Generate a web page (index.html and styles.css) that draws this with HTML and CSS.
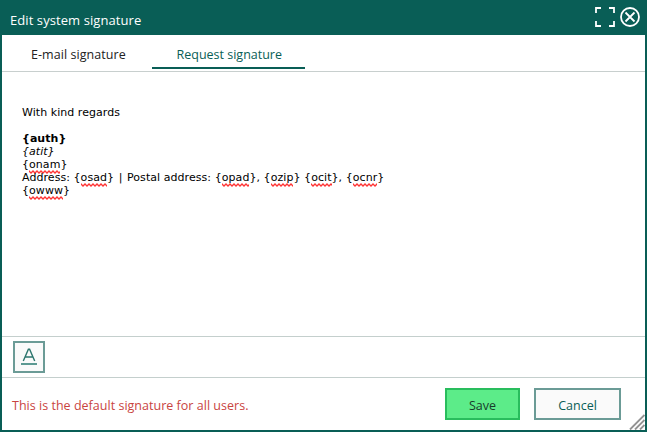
FILE: index.html
```html
<!DOCTYPE html>
<html lang="en">
<head>
<meta charset="utf-8">
<title>Edit system signature</title>
<link rel="stylesheet" href="styles.css">
</head>
<body>
<main class="dialog">
  <header class="titlebar">
    <h1 class="title">Edit system signature</h1>
    <svg class="expand" width="20" height="20" viewBox="0 0 20 20"><path d="M1 6V1H6M14 1H19V6M19 14V19H14M6 19H1V14"/></svg>
    <svg class="close" width="20" height="20" viewBox="0 0 20 20"><circle cx="10" cy="10" r="9"/><path d="M5.5 5.5L14.5 14.5M14.5 5.5L5.5 14.5"/></svg>
  </header>
  <nav class="tabs">
    <a class="tab tab-mail"><span>E-mail signature</span></a>
    <a class="tab tab-request"><span>Request signature</span></a>
  </nav>
  <section class="editor">
    <p>With kind regards</p>
    <p class="gap"><b>{auth}</b></p>
    <p><i>{atit}</i></p>
    <p>{<span class="sp">onam</span>}</p>
    <p class="address">Address: {<span class="sp">osad</span>} <span class="pipe">|</span> Postal address: {<span class="sp">opad</span>}, {<span class="sp">ozip</span>} {<span class="sp">ocit</span>}, {<span class="sp">ocnr</span>}</p>
    <p>{<span class="sp">owww</span>}</p>
  </section>
  <div class="toolbar">
    <button class="format"><svg width="28" height="28" viewBox="0 0 28 28"><path class="letter" d="M8.3 18L13.4 6.2H14.6L19.7 18M10.2 14H17.8"/><path class="rule" d="M6 21H22"/></svg></button>
  </div>
  <footer class="footer">
    <p class="note">This is the default signature for all users.</p>
    <button class="btn save">Save</button>
    <button class="btn cancel">Cancel</button>
  </footer>
  <svg class="grip" width="16" height="16" viewBox="0 0 16 16"><path d="M1 15.5L15.5 1M6 15.5L15.5 6M11 15.5L15.5 11"/></svg>
</main>
</body>
</html>
```
FILE: styles.css
```css
* { box-sizing: border-box; }
body { margin: 0; }
h1, p { margin: 0; }
.dialog {
  position: relative;
  display: flex;
  flex-direction: column;
  width: 647px;
  height: 432px;
  border: 2px solid #095e56;
  border-top: 0;
  background: #fff;
  font: 12.5px/18px "Open Sans", "Noto Sans", sans-serif;
  overflow: hidden;
}
.titlebar {
  display: flex;
  align-items: flex-start;
  height: 35px;
  padding: 7px 5px 0 8px;
  background: #095e56;
  color: #fff;
}
.title { flex: 1; font-size: 13px; font-weight: 400; padding-top: 4px; letter-spacing: 0.08px; }
.titlebar svg { fill: none; stroke: #fff; stroke-width: 1.8; }
.expand { margin-right: 5px; }
.tabs { display: flex; height: 37px; border-bottom: 1px solid #c8cfce; }
.tab { height: 34px; padding-top: 11px; color: #222; white-space: nowrap; }
.tab-mail { width: 150px; padding-left: 29px; letter-spacing: 0.06px; }
.tab-request { width: 153px; padding-left: 24.5px; color: #095e56; border-bottom: 2px solid #095e56; }
.editor {
  height: 264px;
  padding: 34px 20px 0;
  font: 11px/13px "DejaVu Sans", sans-serif;
  letter-spacing: 0.05px;
  color: #000;
}
.gap { margin-top: 13px; }
.address { letter-spacing: 0.06px; }
.pipe { margin: 0 1px; }
.sp {
  padding-bottom: 3px;
  background: url("data:image/svg+xml,%3Csvg xmlns='http://www.w3.org/2000/svg' width='4' height='4'%3E%3Cpath d='M-1 0L2 3L5 0' fill='none' stroke='%23f33' stroke-width='1.3'/%3E%3C/svg%3E") repeat-x left bottom;
}
.toolbar { height: 42px; border: solid #c4cfcd; border-width: 1px 0; padding: 4px 11px; display: flex; }
.format { width: 32px; height: 32px; padding: 0; border: 2px solid #6b9b96; background: #fafafa; }
.format svg { display: block; fill: none; }
.letter { stroke: #2c756d; stroke-width: 1.4; }
.rule { stroke: #5c9992; stroke-width: 2; }
.footer { display: flex; align-items: flex-start; padding: 10px 24px 0 10px; }
.note { flex: 1; padding-top: 9px; color: #c9443f; letter-spacing: 0.02px; }
.btn { height: 32px; padding: 3px 0 0; font: inherit; border: 2px solid; }
.save { width: 75px; background: #5cec89; border-color: #29bd5d; color: #173c2b; margin-right: 14px; }
.cancel { width: 87px; background: #fafafa; border-color: #6b9b96; color: #095e56; }
.grip { position: absolute; right: 0; bottom: 0; fill: none; stroke: #929292; stroke-width: 1.9; }
```
